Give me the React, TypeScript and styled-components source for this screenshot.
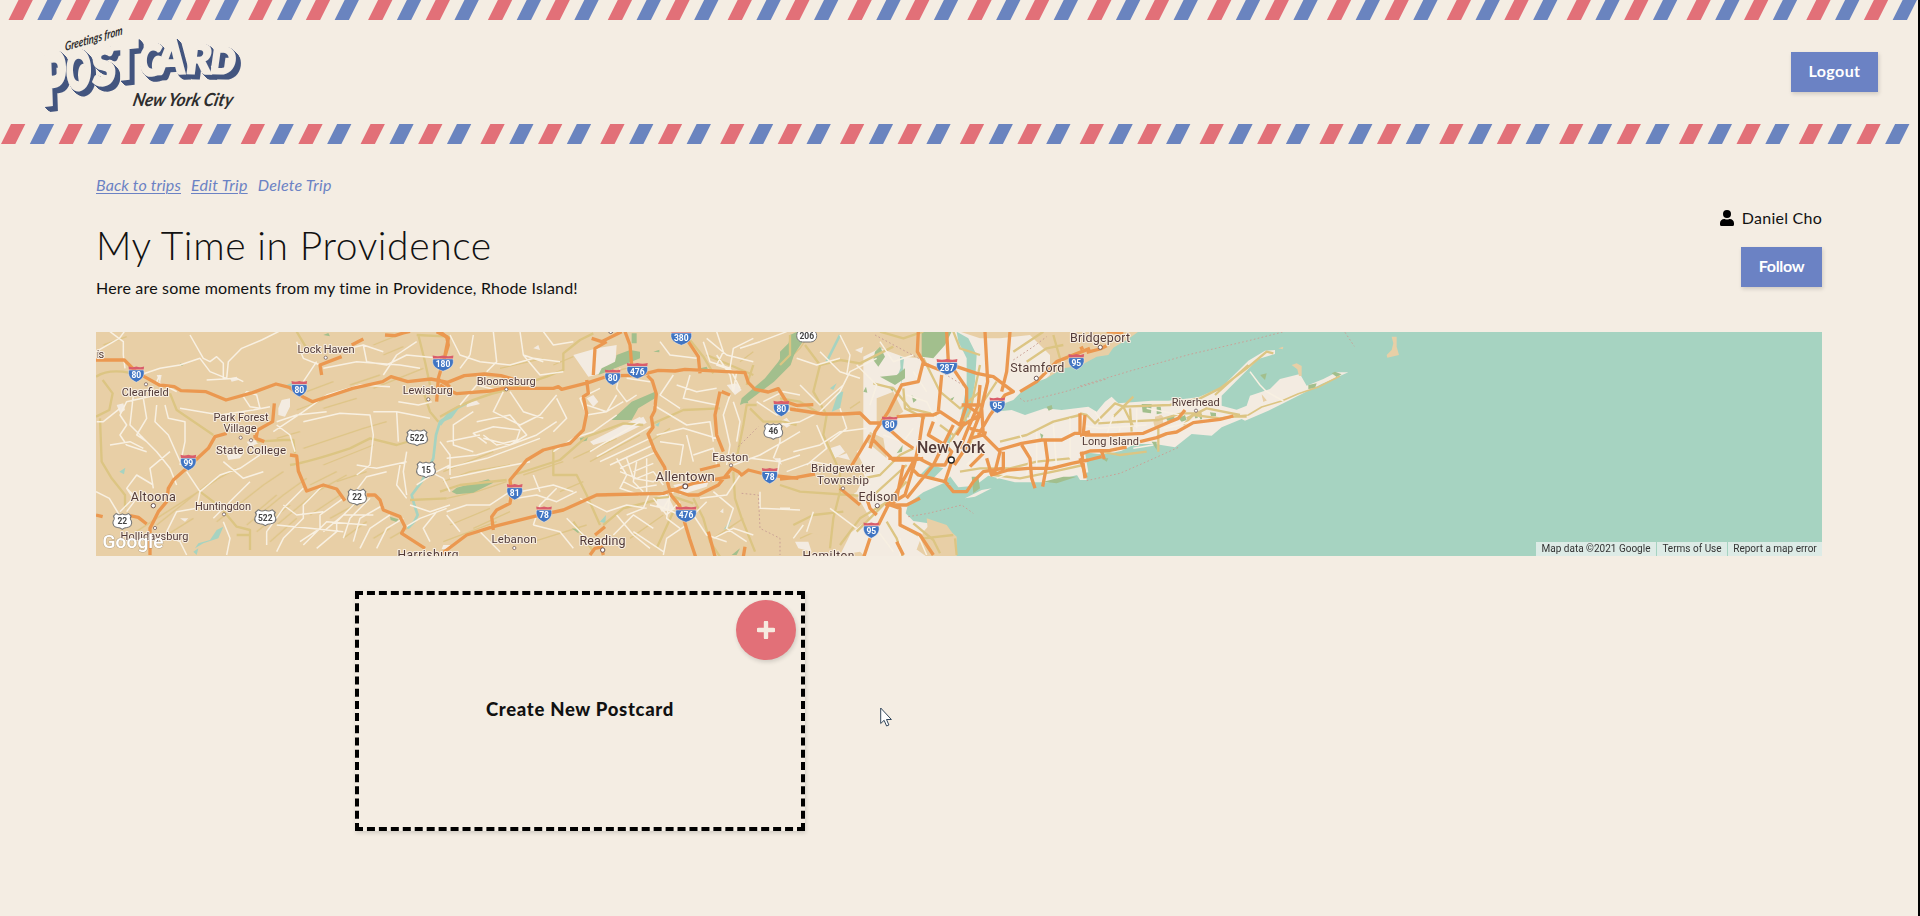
import React from "react";
import styled, { createGlobalStyle, css } from "styled-components";

const cream = "#f4ede3";
const blue = "#6b82c4";
const red = "#e27078";
const navy = "#43557f";
const sans = `Lato, "Open Sans", sans-serif`;

const GlobalStyle = createGlobalStyle`
  *, *::before, *::after { box-sizing: border-box; }
  body { margin: 0; background: ${cream}; overflow: hidden; }
  button { font: inherit; border: 0; cursor: pointer; }
`;

const Page = styled.div`
  min-height: 916px;
  border-right: 2px solid #000;
  background: ${cream};
  color: #111;
  font: 400 16px/20px ${sans};
`;

/* ---------- header ---------- */

const Header = styled.header`
  height: 144px;
  display: flex;
  flex-direction: column;
  justify-content: space-between;
`;

const Stripes = styled.svg`
  display: block;
  width: 100%;
  height: 20px;
`;

const Bar = styled.div`
  flex: 1;
  display: flex;
  align-items: flex-start;
  justify-content: space-between;
  padding: 0 40px 0 36px;
`;

const Logo = styled.svg`
  display: block;
  width: 210px;
  height: 96px;
  margin-top: 4px;
  overflow: visible;
`;

const LogoWord = styled.g`
  font: 900 40px ${sans};
  fill: ${cream};
  stroke: ${cream};
  stroke-width: 2.6px;
  filter: drop-shadow(1px 1px 0 ${navy}) drop-shadow(1px 1px 0 ${navy}) drop-shadow(1px 1px 0 ${navy})
    drop-shadow(1px 1px 0 ${navy}) drop-shadow(1px 1px 0 ${navy});
`;

const LogoScript = styled.text<{ $size: number }>`
  font: italic 700 ${(p) => p.$size}px ${sans};
  fill: #2e2e2e;
`;

const Button = styled.button<{ $width: number; $top?: number; $spacing: number }>`
  width: ${(p) => p.$width}px;
  height: 40px;
  margin-top: ${(p) => p.$top ?? 0}px;
  padding: 0 0 2px;
  background: ${blue};
  color: #fff;
  font: 700 16px/20px ${sans};
  letter-spacing: ${(p) => p.$spacing}px;
  box-shadow: 1px 2px 4px rgba(0, 0, 0, 0.15);
`;

/* ---------- trip ---------- */

const Main = styled.main`
  padding: 31px 96px 0;
`;

const TripTop = styled.section`
  height: 157px;
  display: flex;
  justify-content: space-between;
`;

const TripLinks = styled.nav`
  display: flex;
  gap: 10px;
  font-style: italic;
  color: ${blue};
`;

const TripLink = styled.a<{ $underlined?: boolean; $spacing: number }>`
  letter-spacing: ${(p) => p.$spacing}px;
  ${(p) =>
    p.$underlined &&
    css`
      text-decoration: underline;
      text-decoration-thickness: 1px;
      text-underline-offset: 2px;
    `}
`;

const Title = styled.h1`
  margin: 26px 0 0;
  font: 300 39px/48px ${sans};
  letter-spacing: 0.6px;
`;

const Description = styled.p`
  margin: 9px 0 0;
  letter-spacing: 0.18px;
`;

const Author = styled.div`
  display: flex;
  flex-direction: column;
  align-items: flex-end;
  padding-top: 33px;
`;

const AuthorName = styled.div`
  display: flex;
  align-items: center;
  gap: 8px;
  letter-spacing: 0.25px;
`;

const MapFrame = styled.section`
  position: relative;
  height: 224px;
  overflow: hidden;
`;

const MapSvg = styled.svg`
  display: block;
  width: 100%;
  height: 100%;
`;

const Attribution = styled.div`
  position: absolute;
  right: 0;
  bottom: 0;
  display: flex;
  font: 400 10px/14px Roboto, sans-serif;
  color: #333;
`;

const Credit = styled.span<{ $width: number }>`
  width: ${(p) => p.$width}px;
  height: 14px;
  text-align: center;
  white-space: nowrap;
  background: rgba(245, 245, 245, 0.7);
  & + & {
    border-left: 1px solid #a6d3c1;
  }
`;

const Cards = styled.section`
  display: grid;
  grid-template-columns: 450px;
  padding: 35px 0 0 259px;
`;

const NewCard = styled.article`
  position: relative;
  height: 240px;
  display: flex;
  align-items: center;
  justify-content: center;
  border: 4px dashed #000;
  box-shadow: 1px 2px 4px rgba(0, 0, 0, 0.14);
`;

const CardTitle = styled.h2`
  margin: 0;
  padding-bottom: 5px;
  font: 900 18.5px/22px ${sans};
  letter-spacing: 0.7px;
`;

const AddButton = styled.button`
  position: absolute;
  top: 5px;
  right: 5px;
  width: 60px;
  height: 60px;
  padding: 0;
  display: grid;
  place-items: center;
  border-radius: 50%;
  background: ${red};
  box-shadow: 1px 2px 4px rgba(0, 0, 0, 0.15);
`;

const Pointer = styled.svg`
  position: absolute;
  left: 880px;
  top: 707px;
  width: 14px;
  height: 21px;
`;

const StripeRow = ({ offset }: { offset: number }) => (
  <Stripes viewBox="0 0 1918 20" preserveAspectRatio="none">
    {Array.from({ length: 64 }, (_, i) => {
      const x = offset + Math.floor(i / 4) * 119.85 + (i % 4) * 28.8;
      return <path key={i} d={`M${x} 20l10-20h14.3l-10 20z`} fill={i % 2 ? "#6a84bf" : red} />;
    })}
  </Stripes>
);

/* ---------- map data; each tile is drawn at three units per pixel ---------- */

type Layer = "beige" | "urban" | "park" | "water" | "stream" | "ridge" | "major" | "local" | "ferry" | "highway";
type Tile = { x: number; layers: Partial<Record<Layer, string>> };

const layerOrder: Layer[] = ["ridge", "urban", "water", "beige", "park", "stream", "major", "local", "ferry", "highway"];

const layerStyle: Record<Layer, React.SVGProps<SVGPathElement>> = {
  beige: { fill: "#e8cfa6" },
  urban: { fill: "#f3ebe1" },
  park: { fill: "#a2bf8d" },
  water: { fill: "#a6d3c1" },
  stream: { fill: "none", stroke: "#a6d3c1", strokeWidth: 8 },
  ridge: { fill: "none", stroke: "#dbc27e", strokeWidth: 4, opacity: 0.75 },
  major: { fill: "none", stroke: "#dcc583", strokeWidth: 7 },
  local: { fill: "none", stroke: "#f8f0e2", strokeWidth: 4.5 },
  ferry: { fill: "none", stroke: "#c9a096", strokeWidth: 3, strokeDasharray: "5 7" },
  highway: { fill: "none", stroke: "#eb9850", strokeWidth: 10 },
};

const tiles: Tile[] = [
  {
    x: 90,
    layers: {
      urban:
        "M565 250l10-25 25-5 0 25-15 30-20-5z M410 390l50-5-10 15-35 5z M80 240l20-5 5 20-15 10z M420 160l20-5 5 10-20 5z M200 150l15 0-5 25z M1060 660l20 0 0 12-25 0z M270 580l25 0-10 10z M470 350l25-5 10 10-25 10z",
      park: "M700 30l15-6 5 10z M900 575l25 8-5 8-18-6z M270 115l12 4-8 4z",
      water: "M325 655l35-10 20-30 20-10-15 35-45 15-25 15z M88 440l18-12-4 20z M590 180l20-8-8 18z M310 680l15-10-5 20z",
      stream:
        "M1080 270l-30 20-12 40-8 70-35 70-15 20-15 20 8 30 10 30-10 20-20 20",
      ridge:
        "M130 625l140-90 110-70 M200 600l150-120 90-50 M230 630l80-50 M380 590l140-110 60-40 M470 600l110-90 70-50 M500 620l100-80 M560 600l120-100 90-50 M640 370l180-60 70-20 M560 340l70-20 M660 480l80-40 M700 420l150-60 M780 180l90-30 M850 190l150-60 M880 90l60-25 M700 250l100-30 M620 255l80-30 M40 60l70-25 M900 640l60-35 M850 640l50-30 M500 560l60-50 M540 650l80-70 M660 570l90-60 M720 580l110-60 M760 640l70-50 M740 470l90-30 M650 200l80-30 M850 60l100-40",
      major:
        "M18 155q30-20 80-15l60 10 M240 205l20 50 110 75 M500 350l80-5 30 0 5 40 M600 420q60-10 180-50l60-30 80 20 50-15 M18 275l40-20 10-50-30-40 M30 280l5 130 30 50 40 50 0 40 M330 500l60 45 50 60 40 10 0 60 M440 630l40 0 M960 525l110-5 M985 30l20 80 15 70 M1000 200l20 60 25 30 M980 30l100 5 M620 20l30 50",
      local:
        "M60 20l40 30 0 40 5 40 M18 80l70-40 15-20 M150 150l60-20 60-10 60-20 30 40 50 20 5-50 40-40 60-25 60-30 M300 30l40 70 20 10 20-15 20 20 0 50 M350 165l90-5 20 10 M210 150l-10 20 60 30 M200 210l-90 20-20 40 20 30 -20 30 20 30 60 20 M90 250l-50 40-20 0 M130 210l-10 90 40 40 M160 220l10 60-30 50 30 20 M225 240l10 40 50 10 0 60 -15 70 M200 240l-5 50 40 40 40 90 M150 330l50 50 40 50 20 50 M60 360l60-10 40 20 M270 250l120 20 100-15 50-10 M460 215l20 30 30 5-10-40-30-10z M190 480l-50-30-30 40 20 30-40 40 M240 380l-60 50 10 60 M290 440l40 60 60-50 60-20 60-40 M400 410l60 50 60-20 M330 500l-10 50-60 10-30 60 M550 320l90-60 70-50 100-30 90 5 M560 290l60-20 90-10 M640 290l110-25 90 5 10 60-10 90 -40 30 M560 300l40 30 15 50 M850 260l70 0 100 20 M920 260l5 90 M925 230l60 10 40-10 M820 60l10 50 60 10 60-30 100 10 M880 80l-60-20-40 10 M690 120l-50-20-20-50 M700 130l100-20 130 10 60 10 M950 380l-10 60 10 70 M890 440l-60 15-30 40 M640 490l-60 60-50 70 0 40 M700 480l-60 60 0 40-60 60-20 40 M760 520l-70 50 0 40-60 40 M800 530l-60 60 0 30-60 50 M840 520l-60 60-20 60 M880 540l-70 40-20 70 M900 570l-60 40-30 60 M940 580l-50 30-30 60 M700 620l60-50 90 0 M640 660l70-70 120 10 M580 540l40 30 80-10 M560 600l100 10 100 10 M980 480l60-40 40-20 M960 540l60 20 60-20 M940 610l50-30 80-30 M1020 650l-20-40 40-50 M1050 350l30 40 0 60 M1000 430l60 30 20 40 M220 630l50 20 20 40 M400 590l20 50-10 50 M370 580l60-60 50-50 M110 560l30-40 -30-30 M18 500l40 20 30 50 M640 170l40 -60 M880 150l40-60 60-40 M930 420l-10 60 30 40 M800 420l60 10 90-20",
      highway:
        "M18 105h85l35 35 25 15 45 25 45 5 20 12 75 3 60 25 80-22 70-26 40 10 40 28 30 15 60-20 60-20 90-20 25-15 50 15 70-8 50 10 50-20 60-5 50 5 50 14 M553 235l-5 55-45 25-5 25 25 10 M495 340l0 -10 M410 325l-35 10-20 35-60 55-45 40-15 25-5 40-25 30-15 30-10 20 0 80 M18 570l20 5 M120 572l25 5 25 20 M600 390l20 3 5 45 25 60 50-18 40 12 25 35 M830 510l25 0 15 15 10 30 50 20 15 30-10 20 70 45 M755 95l-65 25 5 30 M785 60l35-18 M885 30l30 2 25-8 20-5 M1040 20l30 15 5 25-30 100-5 70 M1040 160l40 25",
    },
  },
  {
    x: 440,
    layers: {
      urban:
        "M400 90l70-20 60-10-5 70-60 20-20 5z M450 350l150-75 10 15-100 55-50 15z M440 220l20-10 15 20-15 15z M280 70l15-10 5 15z M80 235l30-8 10 10-40 10z M860 180l30-5 15 20-20 15z M700 480l110-20-10 25-80 25z M640 520l40-15 25 50-40 5z M1000 400l20 0 5 20z M840 560l10-10 0 15z M490 330l120-55 10 18-110 55z",
      park:
        "M530 90l40-15 30 5 0 20-75 30-50 20 10-20 40-20z M515 285l60-55 70-30 0 20-50 30-20 35-30 0z M1050 30l22-10 0 40-20 60-50 50-80 60-22 10 5-20 70-60 40-50 30-50z M35 500l15-12 95-25 15 10-60 30-50 5z M420 340l25-8-5 15-18 3z M395 610l25 5-5 10z M575 25l15 0 0 30-15 0z M900 235l20-15 5 15z M780 130l20-5 5 10-20 5z M640 80l18-6 0 8z M875 690l25-20-10 20z",
      water: "M480 590l18-20-2 25z M645 300l15-10-5 15z M10 290l30-40 20-5-25 35z M850 615l25-35-10 25z",
      stream: "M0 300l30-40 50-25",
      ridge:
        "M20 520l90-20 90-30 M30 600l120-50 M10 470l80-30 120-20 M250 450l120-40 M400 400l130-60 M450 410l150-80 M10 650l160-60 M280 650l160-50 M100 610l110-50 M340 120l60-25 M180 130l130-30 M630 350l60-40 M820 640l90-60 M360 500l70-30 M10 440l150-60 M570 640l100-70 M900 110l40-30 M520 140l80-20",
      major:
        "M0 275q100-60 200-80l120-40 50-20 0-50 50-40 40-20 M220 450l140-45 80-70 110-40 60 5 M340 370l0 80 70 0 30 60 40 90 M640 295l90-40 110-5 M750 45l40 50 30 50 M950 240l-30 0-10 60-20 100 M0 500l60-20 140-15 M490 600l60-50 100-25 M760 520l30 60 20 70 30 45 M880 440l5 80 20 60 40 100 M800 90l140 60 M930 250l40 40 60 0 40 10 M700 560l-50 110 M400 590l60 90 M920 180l20-60 M640 520l60-5 60 20",
      local:
        "M30 30l30 60 60 20 90 10 70-20 80 10 M100 30l-10 60 M160 20l10 90-30 30 M240 20l10 70 60 20 M190 200l-30 60 80 40 60-30 50-60 M210 200l40 60 60 20 M100 260l-60 40 0 60 60 20 M130 330l40 30 60-15 10-30-80-10-60 20 40 30 M20 350l100-20 M110 290l100-20 50 60-50 30-80-20 M20 400l90-10 100-30 80-30 60-40 M20 430l120-30 160-60 M30 460l140-30 100-20 M340 380l60-40 60-20 70-50 M480 190l-60 30 20 50 60-10 30-50 M440 240l60 20 50-30 M540 130l-10 60 30 40 30-20 M560 160l70 10 M450 380l150-90 M470 395l160-90 M480 410l150-70 M510 420l130-60 M540 430l110-50 M580 440l60-25 M530 400l30 50-20 40 60 20 M560 400l20 60 60 10 30-20 M590 410l-10 60 30 30 M620 400l0 100 M540 440l50 20 50-20 30 40 M550 470l40 20 60-10 M630 500l-20 50-50 20 M700 500l-30 50-40-10 M640 520l40 50 40-40 M690 510l-10 70 40 30 M650 540l70 30 M830 20l20 60-20 40 60 20-10 60 M800 40l60 50 80 20 M940 40l-60 30-10 60 30 60 M790 50l20 60 60 20 M830 90l40 60 10 50 M950 230l60 40 60-20 M900 70l60-20 80-30 M970 230l60-30 50 10 M640 240l100 60 70-10 10 60 M650 330l80-20 100 30 M720 420l10-60-70-10 M740 330l20 80 M760 390l60-20 10 50 M870 210l-20 60 20 90-10 60 M880 230l20 60-10 60 M880 420l80-30 70-40 50-30 M1000 400l20-50 0-20 M1020 400l-10 60 M930 400l90 10 60-20 M900 450l-40 60 -80 10 M820 500l60 50-20 60 60 40 M960 500l0 50 120 5 M800 530l-40 40 40 60 60 20 M350 490l-50 50-20 60 M420 520l80 40 60-20 60 10 M380 580l60 60 60 10 M520 630l60-60 60 40 M280 600l80 20 40 50 M120 620l60 60 M230 520l60-10 60 20 60-30 M240 500l100-20 60 20 M20 560l60-20 70 0 60-40 M60 620l-40-50 M280 450l20 50 M530 570l50 60 50 40 M740 600l-60 40-10 50 M580 620l90 60 M820 640l60 -30 60 20 M660 50l30 40 80 10 M700 150l-40 60 60 40 M750 150l-20 70 100 20 M710 180l60 20 60-10 M400 50l-60 10-30-40 M250 90l50 60 70-10 M60 130l30-40 M60 240l50-60 60 15 M350 220l30 60-40 40",
      ferry: "M905 505l50 5 5 100 60 30 0 50 M895 365l60-60",
      highway:
        "M0 180l15 10 35 16 100-8 40-8 150 0 15-5 10 8 80-20 60-20 60-2 30 0 60-15 50 2 30-5 180 10 10 30 20 20 40 8 30-10 25 40 30 10 50-2 M0 20l25 20-10 50 M440 165l5 40-15 10 10 50-10 50-40 40-80 20-50 30-50 60 5 40-5 30-40 20-15 20 5 40 M0 690l80-60 80-25 120-30 90-20 100-45 200-5 30-10 60-20 110-20 M685 490l60 20 30 0 60-30 40-50 20 10 10 10 20-15 60 15 90 10 M622 152l15 15 12 40-5 50-10 20 5 30-15 20 20 50 30 50 10 50 10 35 25 30 30 100 20 60 M840 200l-15 70 5 60 20 50 M845 200l25 10 M745 50l30 45 5 50 M780 435l60-15 M555 20l15 40 5 60 M455 40l30 10 60-30 M500 50l-35 20-5 80 M450 690l15-20 25-5 M465 630l30-25 M805 620l20 75 M915 665l-5 30 M490 690l-5-20",
    },
  },
  {
    x: 780,
    layers: {
      urban:
        "M250 95l50-25 70 25 50 5 60-80 60 0 60 20 60 0 90-10 60 60 0 60-80 70-40 60 0 60 40 60-100 110-120 20-80 90-30 80 10 100-90-50-80-70-60 10 40-80-30-80 40-30 30-60-30-60 20-20z M0 290l20-12 15 20-15 10z M150 370l30-10 15 20-30 20z M170 395l30-10 10 20z M225 75l25-10-5 20z M45 650l40 0 10 30-40-10z M240 650l30-15 100 10 70 50-190 0z",
      water:
        "M3200 10L1090 10 1075 20 1045 42 1000 68 985 90 950 95 900 122 850 130 800 160 760 175 720 205 700 225 660 240 630 275 628 310 655 345 600 430 560 470 515 450 490 475 430 502 385 535 377 565 400 588 460 597 505 612 530 635 530 710 3200 710z M530 20l35 20 25 50-5 80-20 120-25 30 0-30 20-110 0-80-25-50z M415 455l35-35 40 10-30 30z M500 330l15-10-10 70-20 60 20-60z M155 260l20-60 15 0-10 50z M360 95l12 5-8 80z M150 190l20-15-10 20z M290 80l15-15-5 30z M350 160l15-40 5 10-10 40z",
      beige:
        "M440 580l60 20 25 35 0 55-60 0-20-60z M290 220l50-20 30 60-60 40-20 0z M270 320l40 20 10 60-60-50z M60 470l170 40 40 70-80 60-130-20z M1535 120l15-5 15 8 0 30-8 0-5-20z M1820 90l15-15 5-20-5-20 15 0 0 30 7 25-35 8z M1495 70l15-5-2 8z M1120 290l20-20 10 5-5 30-20 5z M1445 208l15 18-10 5z",
      park:
        "M425 20l90 0-20 40-35 40-35-5z M0 80l45-45 35-10-15 30-40 60-25 20z M285 80l15-15 15 30-20 30-15-20z M300 155l50-5 25-20 0 30-30 20z M395 210l15 15-10 8z M325 185l15 0-2 15z M350 385l18-25-2 20z M505 225l18-10-5 10z M250 200l8-15 4 18z M575 455l20 0 5 35-20 15z M790 470l60-15 40 0-60 20z M800 245l15-5 3 12-12 5z",
      stream: "M180 30l-40 80",
      ridge: "M0 130l60-60 20-30 M60 640l90-40 60-50 M210 250l30-20",
      major:
        "M75 60l45 60-20 80 40 70-10 60 50 110 0 60-20 80-10 90 M0 220l60 10 50 30 M120 120l60-15 60 10 100-50 M0 480l60 20 150 10 60 5 M180 660l60-80 100-60 M280 175l60 15 50 60 80 20 M370 190l5 60 60 30 M430 100l50 100 60 50 60-50 M600 120l-30 140-60 90 M620 180l-50 180 M650 170l-40 60 M520 20l20 50 60 20 M40 600l60-30 90-10 M200 470l100-20 60-60 40-20 M270 520l110-100 M230 620l90-90 60-60 M320 590l30 50 20 60 M360 600l70 40 90-10 M400 595l60 50 20 40 M525 640l5 50 M30 30l0 60-30 30 M540 440l60-10 90 0 80-20 100 -10 M660 350l80-20 80-40 80-20 M640 450l80 10 100-20 90-20 M480 300l40 30 M300 20l70 20 60-20 M700 80l90-60 M740 110l60-40 50-10 M820 30l20 70",
      local:
        "M0 300l60-10 60-30 60-60 30-60 80-40 M50 100l60 20 70-20 M120 80l60 60 60 20 M180 30l30 60-10 60 M60 180l60 60 70-60 M40 380l80-20 60-40 80-10 M110 300l30 70-60 50 M180 250l20 60-50 40 M20 440l80-30 100 20 M30 550l-30 0 M150 550l80 60 M40 640l30-40 M100 560l-20 60 M300 50l40 60 60-20 M230 120l60 60-20 60 M310 330l60 20 30-40 M380 210l60 20 30 60 M400 140l40 60 M530 370l80 30 M540 400l50-40 M560 420l60-60 M700 440l-50 20 M720 330l30 60-10 60 M770 320l0 120 M820 300l10 130 M870 280l0 120 M250 440l20 40 M280 600l60 80 M360 640l0 60 M410 620l30 70",
      ferry: "M385 575l60-10 100-25 35 25 M720 220l15 10 120-30 125-38 M285 30l140 75 140 85 M700 105l60-40 40-30",
      highway:
        "M0 462l50-5 55-10 M180 490l60 50 M30 252l100 15 60 0 50-3 30 30 60 0 M275 340l65 65 60 0 30-5 M270 330l-60 100 M415 20l-3 60 18 30-15 60-50 10-40 80-40 60-15 50 M500 20l5 90 55 80 0 50-20 60-60-40-20 10-40 0-70 5 M485 150l-10 110 M430 115l50 20 M530 125l60 20 50 10 60 45-25 10-45 60-35 60 M615 20l8 150-20 90-40 100-40 60 M690 20l-10 120-15 60 M600 180l-5 60-35 80-20 50 M605 250l5 80 50 50-15 60-15 10 M720 200l50-30 60-60 100-40 M655 375l70-20 60-10 60 0 40-20 15 0 0-60 M670 380l0 50-60 10-30 30-20 30-40 0-25-30-40-10-40-10-20-20 M725 360l25 40 5 60 10 30 M795 345l8 60-15 80 M610 385l-40 40 M620 400l15 50 50-15 60-5 70 0 60-15 50-10 40-10 M905 380l10 80 M430 270l-10 70-15 70-30 100-50 30-30 60 M400 410l-60 110-20 20 60 0 40-20 M460 290l-15 40 50 30 20 20-20 40-40 0-40-20-90 0 M520 300l-60 120-80 100 M260 520l10 30 20 20 M330 540l30 10 0 50 60 30 40 60 M270 640l-20 60 M350 650l20 40 M515 410l-20 60 10 10 M415 270l45 0 M545 240l60 0 M555 290l-25 40 M570 310l50 15 M570 340l40-10 M370 420l-20 100 M560 240l40 30-50 30 M330 315l40 35 30 20",
    },
  },
  {
    x: 1080,
    layers: {
      urban:
        "M-390 345l45-10 20-30-20-30 50 10 40-25 50-5 40 15 60-20 50 5 80-10 25 15 25-30 20-15 20 20 100-8 50 0 90-10 70-30 80-80 50-30 30-2 0 12-50 15-60 60-50 50 0 30 45 12 30-12 10-30 60-20 30-30 60-15 20 35 50-20 40-20 35 0-80 35-100 50-60 30-70 30-10-5-60 25-30 25-60-5-50 40-60-10-60 0-40 20-40 10-30 0-40-5 10 60-120 30-100 0-80-20-40 30-50 5-30-40 20-60z M-345 520l50-25 30-5-50 25z M15 405l5 60-20 0-30-50z",
      water:
        "M-140 460l120-10 20-12-60-10-90 25z M60 400l30-15 10 10-20 10z M70 255l20-10 5 12z M170 222l15 10 5-10z M-170 305l15-25 5 20z",
      park:
        "M185 237l30 0-2 28-25-3z M230 245l12 0 3 20-15 3z M258 280l25-12 0 15-20 5z M295 280l20-10 5 15-15 5z M345 265l8 0 0 15-8 0z M358 268l8 0 0 15-8 0z M390 262l18 2 0 10-15 0z M685 180l25-5-5 15-20 2z M755 145l10-5 20 8-15 8z M540 150l20-5-5 20z M65 400l20 0-5 10z M215 350l15 0 0 25z M-120 325l10 5-5 15z",
      beige: "M0 60l20 0 40 20-20 20-40 0z M225 275l20-5 5 25-25 5z M545 210l15 18-8 0z",
      stream: "M535 140l5 30",
      major:
        "M0 265l20 5 25 25 60-60 25 10 30 60 M55 295l80-5 100-5 70-20 60 0 M130 245l140-5 90-20 60-30 80-60 60-50 20 5 M405 210l100-90 M320 280l60-30 100 20 M100 275l60-60 M150 250l5 70 M310 300l30-30 80 10 40-5 40 0 M235 310l0 70 M60 380l60 10 80-10",
      local:
        "M0 300l60 10 140-10 M65 290l-20-30 M200 250l100 20 M80 330l20-60 M170 310l0-60 M510 140l30 40 20 20 50 28 M250 310l50-10 60-20 M160 370l60-10 M120 310l-10 40",
      ferry: "M0 183l150-45 180-50 180-42 110-28 M795 22l28 42 M20 467l100-22 80-35 100-45",
      highway:
        "M0 330l90 0 100-5 80-35 25-10 20-25 M180 350l50-12 30-12 30-5 50-28 80-10 40-10 M0 388l30-10 60-2 50-10 M15 270l-5 55 20-5 M0 400l10 30 8 28 M65 380l8 22 M0 72l10-5 M20 82l40-10 20-10 M80 20l50 3",
    },
  },
];

const montaukRoad = "M455 275l50-5 40-24 60-18 50-22 60-20 65-33";

type Place = [name: string, cx: number, baseline: number, width: number, size: number];
const places: Place[] = [
  ["is", 100.5, 357.5, 7.5, 11],
  ["Clearfield", 145.3, 396, 47, 11],
  ["Lock Haven", 326, 353, 57, 11],
  ["Lewisburg", 427.7, 394.3, 50, 11],
  ["Park Forest", 241, 420.5, 55, 11],
  ["Village", 240, 432, 33, 11],
  ["State College", 251, 453.5, 70, 11.5],
  ["Altoona", 153.3, 501, 45, 12.5],
  ["Huntingdon", 223, 510, 56, 11],
  ["Hollidaysburg", 154.5, 540, 68, 11],
  ["Harrisburg", 428, 559, 61, 12],
  ["Bloomsburg", 506.3, 385.3, 59, 11],
  ["Lebanon", 514, 543.3, 45, 11.5],
  ["Reading", 602.5, 545, 46, 12.5],
  ["Easton", 730.3, 460.5, 36, 11.5],
  ["Allentown", 685.3, 480.5, 59, 13],
  ["Bridgewater", 843, 471.5, 64, 11.5],
  ["Township", 843, 483.5, 52, 11.5],
  ["Edison", 878, 500.5, 39, 12.5],
  ["Hamilton", 828.5, 560, 52, 12],
  ["New York", 951, 452.8, 68, 16],
  ["Stamford", 1037.3, 372.3, 54, 12.5],
  ["Bridgeport", 1100, 342, 60, 12.5],
  ["Riverhead", 1195.7, 406, 48, 11],
  ["Long Island", 1110.5, 445.3, 57, 11],
];

type Dot = [x: number, y: number, r: number];
const dots: Dot[] = [
  [146, 384.3, 1.6], [325.7, 357.7, 1.6], [428.3, 399.3, 1.6], [240.7, 437.7, 1.6], [251, 440.3, 1.6],
  [153.3, 505.7, 2.2], [224, 514.3, 1.6], [155, 528, 1.6], [506.3, 389.3, 1.6], [731, 465.3, 1.6],
  [685.3, 486.3, 2.4], [514.3, 548, 1.6], [602.7, 550, 2.2], [843, 488.3, 1.6], [877.3, 505.7, 2.1],
  [951.3, 460, 3], [1036.3, 378.3, 2.1], [1100.3, 347.3, 2.1], [1196, 410.7, 1.6], [610.7, 331.5, 2],
];

type Sign = [label: string, x: number, y: number];
const interstates: Sign[] = [
  ["80", 136.3, 374], ["80", 299.3, 388.5], ["99", 188.3, 462.3], ["180", 443, 363], ["80", 612.7, 377],
  ["476", 637.3, 370.5], ["380", 681.3, 337], ["80", 781.3, 408.3], ["81", 514.7, 491.7], ["78", 544, 514],
  ["78", 769.7, 475.5], ["476", 686, 514], ["287", 947, 366.5], ["80", 889.7, 424], ["95", 997.3, 405],
  ["95", 1076.3, 361.7], ["95", 871.3, 530],
];
const usRoutes: Sign[] = [
  ["22", 122.3, 521], ["522", 265.3, 517.3], ["522", 417, 437.3], ["15", 426, 469.3], ["22", 357, 496.7], ["46", 773.3, 431],
];

const SignText = styled.text`
  font: 700 8.5px Roboto, sans-serif;
  text-anchor: middle;
`;

const Interstate = ({ sign: [label, x, y] }: { sign: Sign }) => {
  const w = label.length > 2 ? 10.6 : 8;
  return (
    <g transform={`translate(${x} ${y})`}>
      <path
        d={`M${-w + 0.6} -4C${-w - 0.8} 1 ${-w + 1.5} 5.500 0 8.2C${w - 1.5} 5.500 ${w + 0.8} 1 ${w - 0.6} -4z`}
        fill="#4075c3"
        stroke="#f7efe6"
        strokeWidth=".5"
      />
      <path
        d={`M${-w + 0.6} -4.400l-.4-3.200q${w / 2} 1.600 ${w - 0.2} 0q${w / 2} 1.600 ${w - 0.2} 0l-.4 3.200z`}
        fill="#d95d6b"
      />
      <SignText y="4" fill="#fff">{label}</SignText>
    </g>
  );
};

const UsRoute = ({ sign: [label, x, y] }: { sign: Sign }) => (
  <g transform={`translate(${x} ${y})`}>
    <path
      transform={`scale(${label.length > 2 ? 1.18 : 1.05} 1)`}
      d="M-6-7.5l2 1q2 .8 4-.6 2 1.4 4 .6l2-1 2.400 2.600q-1.600 2.300.2 4.700q1 2.500-.4 4.700-1.200 1.700-3.600 2-2.600.2-4.600 1.800-2-1.600-4.600-1.800-2.400-.3-3.600-2-1.400-2.200-.4-4.700 1.800-2.400.2-4.700z"
      fill="#fff"
      stroke="#777"
      strokeWidth="1"
    />
    <SignText y="3.3" fill="#444">{label}</SignText>
  </g>
);

const PlaceText = styled.text`
  font-family: Roboto, sans-serif;
  text-anchor: middle;
  fill: #523a37;
  stroke: #f7eee2;
  stroke-width: 2.2px;
  stroke-linejoin: round;
  paint-order: stroke;
`;

const Watermark = styled.text`
  font: 500 19px Roboto, sans-serif;
  fill: #fff;
  stroke: #8d8172;
  stroke-opacity: 0.5;
  stroke-width: 1px;
  paint-order: stroke;
`;

const TripMap = () => (
  <MapSvg viewBox="96 332 1726 224" preserveAspectRatio="none">
    <rect x="96" y="331" width="1726" height="226" fill="#e8cfa6" />
    {layerOrder.map((layer) => (
      <g key={layer} strokeLinejoin="round" strokeLinecap="butt" {...layerStyle[layer]}>
        {(layer === "urban" ? tiles.slice(0, 3) : tiles).map((tile) => (
          <path key={tile.x} transform={`translate(${tile.x} 325) scale(.33333)`} d={tile.layers[layer]} />
        ))}
        {layer === "water" && (
          <path transform="translate(1080 325) scale(.33333)" d={tiles[3].layers.urban} {...layerStyle.urban} />
        )}
        {layer === "major" && (
          <path transform="translate(1080 325) scale(.33333)" d={montaukRoad} strokeWidth="5" />
        )}
      </g>
    ))}
    {dots.map(([x, y, r]) => (
      <circle key={`${x}-${y}`} cx={x} cy={y} r={r} fill="#fff" stroke={r > 2.5 ? "#222" : "#6b5350"} strokeWidth={r / 2.2} />
    ))}
    {places.map(([name, x, y, width, size]) => (
      <PlaceText key={name} x={x} y={y} textLength={width} fontSize={size} fontWeight={size > 15 ? 500 : 400}>
        {name}
      </PlaceText>
    ))}
    {interstates.map((sign) => (
      <Interstate key={sign.join()} sign={sign} />
    ))}
    {usRoutes.map((sign) => (
      <UsRoute key={sign.join()} sign={sign} />
    ))}
    <g transform="translate(806.7 336)">
      <rect x="-10" y="-6.5" width="20" height="12.5" rx="6" fill="#fff" stroke="#777" />
      <SignText y="3" fill="#444">206</SignText>
    </g>
    <Watermark x="102.5" y="547.5" textLength="61">Google</Watermark>
  </MapSvg>
);

type Letter = [char: string, x: number, y: number, width: number, height: number, turn: number];
const letters: Letter[] = [
  ["P", 7, 81, 24, 1.75, -8],
  ["O", 31, 67, 25, 1.32, -8],
  ["S", 57, 62, 23, 1.27, -8],
  ["T", 76, 56, 26, 1.26, -6],
  ["C", 103, 52, 22, 1.06, -4],
  ["A", 120, 50, 28, 1.16, -2],
  ["R", 149, 49, 25, 1, 1],
  ["D", 173, 49, 25, 0.9, 2],
];

export default function App() {
  return (
    <Page>
      <GlobalStyle />
      <Header>
        <StripeRow offset={8.5} />
        <Bar>
          <Logo viewBox="0 0 210 96" role="img" aria-label="Greetings from Postcard New York City">
            <LogoWord>
              {letters.map(([char, x, y, width, height, turn]) => (
                <text
                  key={char + x}
                  transform={`translate(${x} ${y}) rotate(${turn}) skewX(-6) scale(1 ${height})`}
                  textLength={width}
                  lengthAdjust="spacingAndGlyphs"
                >
                  {char}
                </text>
              ))}
            </LogoWord>
            <LogoScript $size={12} transform="translate(29 27) rotate(-16) skewX(-16)" textLength="60" lengthAdjust="spacingAndGlyphs">
              Greetings from
            </LogoScript>
            <LogoScript $size={18} transform="translate(96 82) skewX(-12)" textLength="100" lengthAdjust="spacingAndGlyphs">
              New York City
            </LogoScript>
          </Logo>
          <Button $width={87} $top={32} $spacing={0.4}>Logout</Button>
        </Bar>
        <StripeRow offset={1} />
      </Header>

      <Main>
        <TripTop>
          <div>
            <TripLinks>
              <TripLink $underlined $spacing={0.13}>Back to trips</TripLink>
              <TripLink $underlined $spacing={0.27}>Edit Trip</TripLink>
              <TripLink $spacing={0.23}>Delete Trip</TripLink>
            </TripLinks>
            <Title>My Time in Providence</Title>
            <Description>Here are some moments from my time in Providence, Rhode Island!</Description>
          </div>
          <Author>
            <AuthorName>
              <svg width="14" height="16" viewBox="0 0 448 512">
                <path d="M224 256a128 128 0 1 0 0-256 128 128 0 1 0 0 256zm90 32h-17a174 174 0 0 1-146 0h-17A134 134 0 0 0 0 422v42a48 48 0 0 0 48 48h352a48 48 0 0 0 48-48v-42a134 134 0 0 0-134-134z" />
              </svg>
              Daniel Cho
            </AuthorName>
            <Button $width={81} $top={19} $spacing={-0.35}>Follow</Button>
          </Author>
        </TripTop>
        <MapFrame>
          <TripMap />
          <Attribution>
            <Credit $width={120}>Map data ©2021 Google</Credit>
            <Credit $width={71}>Terms of Use</Credit>
            <Credit $width={95}>Report a map error</Credit>
          </Attribution>
        </MapFrame>
        <Cards>
          <NewCard>
            <CardTitle>Create New Postcard</CardTitle>
            <AddButton aria-label="Add">
              <svg width="18" height="18" viewBox="0 0 18 18">
                <path d="M9 1.500v15M1.500 9h15" stroke="#f6eadf" strokeWidth="4.400" strokeLinecap="round" />
              </svg>
            </AddButton>
          </NewCard>
        </Cards>
      </Main>
      <Pointer viewBox="0 0 14 21">
        <path d="M.7 1v15.500l3.400-3.200 2.500 5.700 2.300-1-2.400-5.500h4.900z" fill="#fff" stroke="#33475c" />
      </Pointer>
    </Page>
  );
}
